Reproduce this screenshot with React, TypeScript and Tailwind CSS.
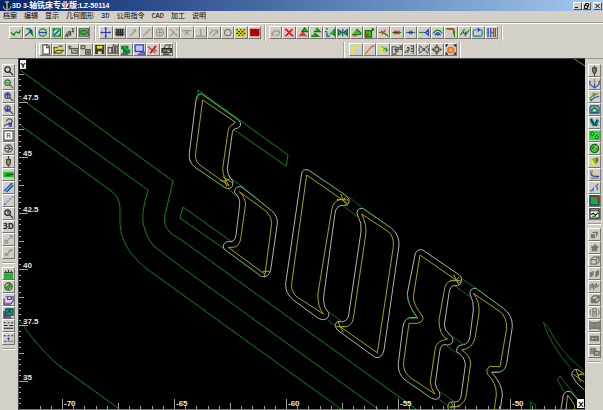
import { ReactNode } from 'react';

// ============================================================
// Toolbar icons: drawn on a 12 x 12 grid
// Each part is [path, colour] or [path, colour, 'fill']
// ============================================================

type Part = [string, string] | [string, string, 'fill'];

interface Tool {
  label: string;
  parts: Part[];
  text?: string;
  textColor?: string;
  disabled?: boolean;
}

const K = '#222222';
const G = '#00a000';
const LG = '#10d020';
const B = '#2038e0';
const R = '#e82020';
const Y = '#f0f000';
const D = '#9a978f';
const S = '#555555';

const LENS = 'M2 5a3 3 0 1 0 6 0a3 3 0 1 0-6 0M7.500 7.500L11 11';

const DRAW_TOOLS: Tool[] = [
  { label: 'Contour', parts: [['M1 6L4 9Q6 4 8 6T11 3', '#008000']] },
  { label: 'Arc', parts: [['M2 2Q9 1 9 8M6 5L10 10', G], ['M1 10L8 4M5 4H8V7', B]] },
  { label: 'Circle', parts: [['M2 6a4 4 0 1 0 8 0a4 4 0 1 0-8 0', G], ['M2 6H10', B]] },
  { label: 'Rectangle', parts: [['M2 2H10V10H2Z', G], ['M3 9L9 3', B], ['M2 2h2v2H2ZM8 8h2v2H8Z', '#008080', 'fill']] },
  { label: 'Letters', parts: [['M1 11L3 7L4 11M2 9.500H4M5 9V5H7V7H5M7 7V9H5M11 2H9V5H11', S]] },
  { label: 'Pocket', parts: [['M1 2H11V10H1Z', S], ['M2 6Q2 4 4 4H8Q10 4 10 6T8 8H4Q2 8 2 6Z', '#50a050', 'fill'], ['M2 6Q2 4 4 4H8Q10 4 10 6T8 8H4Q2 8 2 6Z', '#108010']] },
];

const SNAP_TOOLS: Tool[] = [
  { label: 'Free', parts: [['M6 1V11M1 6H11M5 2L6 1L7 2M5 10L6 11L7 10M2 5L1 6L2 7M10 5L11 6L10 7', '#2040b0']] },
  { label: 'Grid', parts: [['M1 3H11M1 5.500H11M1 8H11M3 2V10M5 2V10M7 2V10M9 2V10', K]] },
  { label: 'End point', parts: [['M3 10L9 3M7 3H9V5', D]], disabled: true },
  { label: 'Middle', parts: [['M2 10L10 2M5 5L7 7', D]], disabled: true },
  { label: 'Centre', parts: [['M2 6a4 4 0 1 0 8 0a4 4 0 1 0-8 0M6 3V9M3 6H9', D]], disabled: true },
  { label: 'Crossing', parts: [['M2 2L10 10M2 10L7 5M9 3L10 2', D]], disabled: true },
  { label: 'Tangent', parts: [['M1 4H11M4 9L6 5L8 9', D]], disabled: true },
  { label: 'Perpendicular', parts: [['M1 10H11M6 2V10', D]], disabled: true },
  { label: 'Parallel', parts: [['M1 8L6 3M5 10L10 4M7 4H10V7', D]], disabled: true },
  { label: 'Ring', parts: [['M2.500 6a3.500 3.500 0 1 0 7 0a3.500 3.500 0 1 0-7 0', '#77756f']], disabled: true },
  { label: 'Yellow layer', parts: [['M1 2H11V10H1Z', '#e0e000', 'fill'], ['M1 3h2M5 3h2M9 3h2M3 5h2M7 5h2M1 7h2M5 7h2M9 7h2M3 9h2M7 9h2', K]] },
  { label: 'Red layer', parts: [['M1 2H11V10H1Z', '#e00000', 'fill'], ['M1 3h2M5 3h2M9 3h2M3 5h2M7 5h2M1 7h2M5 7h2M9 7h2M3 9h2M7 9h2', '#300000']] },
];

const EDIT_TOOLS: Tool[] = [
  { label: 'Undo', parts: [['M2 6V9H5M2 9Q3 4 7 4T10 7Q10 9 8 9H6', D]], disabled: true },
  { label: 'Delete', parts: [['M2 2L10 10M10 2L2 10M3 2L11 10M10 3L3 10', '#f01010']] },
  { label: 'Move', parts: [['M6 5L11 10H1Z', '#f03030', 'fill'], ['M8 1L11 5H5Z', LG, 'fill'], ['M8 1L11 5H5Z', '#107010']] },
  { label: 'Copy', parts: [['M5 6L9 10H1Z', LG, 'fill'], ['M7 1L11 5H4Z', LG, 'fill'], ['M7 1L11 5H4M5 7L9 10H1', '#107010']] },
  { label: 'Rotate', parts: [['M5 8L11 2V9Z', LG, 'fill'], ['M11 2V10M2 2H4M1 5H3', '#107010'], ['M3 6V10H6', B]] },
  { label: 'Mirror', parts: [['M1 3L5 6L1 9ZM11 3L7 6L11 9Z', LG, 'fill'], ['M1 3V9L5 6ZM11 3V9L7 6Z', '#107010'], ['M6 2V10', B]] },
  { label: 'Stretch', parts: [['M6 2L11 7H2Z', LG, 'fill'], ['M6 2L11 7M1 8H11', '#107010'], ['M1 10L4 7L7 10Z', '#f03030', 'fill']] },
  { label: 'Scale', parts: [['M1 4H8V11H1Z', LG, 'fill'], ['M1 4H8V11H1ZM7 5L10 2M8 2H10V4', '#107010'], ['M2 7H5V10H2Z', '#f02020', 'fill']] },
  { label: 'Trim', parts: [['M1 6H4M7 7L11 10', G], ['M3 4L8 8M8 3L4 8', R]] },
  { label: 'Trim both', parts: [['M1 6H3M9 6H11', G], ['M3 4L6 8M6 4L3 8M7 4L9 8M9 4L7 8', '#d04020'], ['M3 6H9', '#703020']] },
  { label: 'Break', parts: [['M1 6H11', G], ['M3 6H9M5 4V8M7 4V8', B]] },
  { label: 'Extend', parts: [['M1 6H6', G], ['M6 6H8M11 3L8 6L11 9Z', B]] },
  { label: 'Offset', parts: [['M1 7Q6 0 11 7', G], ['M3 9Q6 3 9 9M4 7L6 9L8 7', B]] },
  { label: 'Fillet', parts: [['M1 2H6Q10 2 10 6V11', G], ['M2 2H9V8', R]] },
  { label: 'Chamfer', parts: [['M1 9L6 2M6 10L11 3', G], ['M4 6L7 8M7 8V5', B]] },
  { label: 'Closed contour', parts: [['M4 3H9Q11 3 11 5V8Q11 10 9 10H3Q1 10 1 8V5Q1 3 4 3', '#0090a0'], ['M6 1L8 3L6 5', B]] },
  { label: 'Distance', parts: [['M2 1V11M5 1V11', B], ['M5 6H8M3 5L2 6L3 7', G], ['M8 1V11M10 1V11', R]] },
];

const FILE_TOOLS: Tool[] = [
  { label: 'New', parts: [['M3 1H8L10 3V11H3Z', '#ffffff', 'fill'], ['M3 1H8L10 3V11H3ZM7 1V4H10', S]] },
  { label: 'Open', parts: [['M1 4H5L6 5H9V10H1Z', '#e8e060', 'fill'], ['M1 10V4H5M1 10L4 7H11L8 10ZM6 3Q8 1 10 3', '#606000']] },
  { label: 'Import', parts: [['M1 2L5 6M2 6L4 2M5 5H11V10H5ZM7 7H9V8', S]] },
  { label: 'Merge', parts: [['M1 2H5V5H1ZM6 6H11V11H6ZM7 7L10 10M10 7L7 10', S]] },
  { label: 'Save', parts: [['M1 1H11V11H1Z', '#404010', 'fill'], ['M3 2H9V5H3Z', '#e0e040', 'fill'], ['M4 8H8V11H4Z', '#d8d8d8', 'fill']] },
  { label: 'Save part', parts: [['M1 4H5V10H1ZM6 3H8V10H6ZM9 2H11V10H9Z', S], ['M6 1H8', K]] },
  { label: 'Export', parts: [['M1 2H9V6H1ZM3 6H11V10H3Z', '#108030', 'fill'], ['M4 3L9 7', LG], ['M1 11H9', K]] },
  { label: 'Screen', parts: [['M2 2H10V8H2Z', '#b8c8ff', 'fill'], ['M1 1H10V8H1ZM6 9H11V11H4', '#3838c0']] },
  { label: 'Clear', parts: [['M1 3L9 10M9 2L3 10M10 2L4 10', '#e02020'], ['M7 5L10 8', S]] },
  { label: 'Print', parts: [['M3 5L5 1H10L8 5', S], ['M1 5H11V9H1Z', '#77756f', 'fill'], ['M1 5H11V9H1ZM2 11H9', K], ['M7 8H9', Y]] },
];

const VIEW_TOOLS: Tool[] = [
  { label: 'Curve', parts: [['M3 11Q1 4 4 4Q8 4 11 1M2 6L5 3', Y]] },
  { label: 'Line', parts: [['M1 11L5 6Q8 2 11 2', '#e05050']] },
  { label: 'Pick', parts: [['M2 2L10 5L6 8Z', LG, 'fill'], ['M2 2L5 10L7 5Z', Y, 'fill'], ['M9 4L11 7L9 8', '#208020']] },
  { label: 'Sort', parts: [['M1 3H5V11H1ZM3 6H5M6 4H8V6H6V8H8M9 2H11V6H9M9 4H11', S]] },
  { label: 'Order', parts: [['M1 8V10M3 4H5V7H3V9H5M7 2H10V8H7M7 5H10M10 9V11', S]] },
  { label: 'Zoom in all', parts: [['M1 2L4 4M11 2L8 4M1 10L4 8M11 10L8 8M1 4V8M11 4V8M5 5H7V7H5Z', S]] },
  { label: 'Pan', parts: [['M4 4H8V8H4Z', S], ['M6 0L8 3H4ZM6 12L8 9H4ZM0 6L3 4V8ZM12 6L9 4V8Z', S, 'fill']] },
  { label: 'Shade', parts: [['M4 3H8L10 5V8L8 10H4L2 8V5Z', '#f07020', 'fill'], ['M1 3V1H3M9 1H11V3M11 9V11H9M3 11H1V9', K], ['M4 5H8V8H4Z', '#ffc050', 'fill']] },
];

const LEFT_TOP: Tool[] = [
  { label: 'Zoom', parts: [[LENS, K]] },
  { label: 'Zoom window', parts: [[LENS, S], ['M3 4H7V6H3Z', LG, 'fill']] },
  { label: 'Zoom up', parts: [[LENS, '#404070'], ['M5 3V7M3 5L5 3L7 5', B]] },
  { label: 'Zoom down', parts: [[LENS, '#404070'], ['M5 3V7M3 5L5 7L7 5', B]] },
  { label: 'Pan view', parts: [['M4 5a3 3 0 1 1 6 0L8 8H4L1 10', S], ['M6 6L9 9M9 6V10H6', B]] },
  { label: 'Redraw', parts: [['M1 1H11V11H1Z', '#ffffff', 'fill'], ['M1 1H11V11H1Z', S]], text: 'R', textColor: '#333333' },
  { label: 'Rotate view', parts: [['M2 6a4 4 0 1 0 8 0a4 4 0 1 0-8 0M2 6H10M5 3L8 6L5 9', S]] },
  { label: 'Cutter', parts: [['M4 4H8V8L6 11L4 8Z', '#a8a050', 'fill'], ['M6 0V4M4 4H8V8L6 11L4 8Z', '#404038']] },
  { label: 'Stock', parts: [['M0 3H12V9H0Z', '#18d028', 'fill'], ['M3 5H8V8H3Z', '#207020', 'fill'], ['M8 6H11', K]] },
  { label: 'Blade', parts: [['M2 11L10 2L11 1V4L4 11Z', '#30c060', 'fill'], ['M1 10L10 1M4 11L11 4', B]] },
  { label: 'Points', parts: [['M1 10h2M4 7h2M7 4h2M10 2h1', '#3040e0'], ['M3 9L9 3', '#a0a8e0']] },
  { label: 'Query', parts: [[LENS, K], ['M4 4H6V5L5 6M5 7V7.500', '#606030']] },
  { label: '3D', parts: [], text: '3D', textColor: '#222222' },
  { label: 'Fit', parts: [['M1 10L4 7M2 7H5V10H2ZM6 6L10 2M7 2H10V5', D]], disabled: true },
  { label: 'Surface', parts: [['M1 9L3 6L5 7L7 3L11 2L9 5L7 6L5 10Z', D, 'fill']], disabled: true },
];

const LEFT_BOTTOM: Tool[] = [
  { label: 'Machine', parts: [['M1 6H11V10H1Z', '#18b828', 'fill'], ['M1 5H11M3 3V5M6 2V5M9 3V5', '#404040'], ['M1 11H11', '#107010']] },
  { label: 'Hatch', parts: [['M2 6a4 4 0 1 0 8 0a4 4 0 1 0-8 0', '#a8c8a0', 'fill'], ['M2 6a4 4 0 1 0 8 0a4 4 0 1 0-8 0M3 8L8 3M5 9L9 5', '#207020']] },
  { label: 'Layer off', parts: [['M1 5H8V11H1Z', '#e890b0', 'fill'], ['M3 3H11V9H3Z', '#d8d8f8', 'fill'], ['M3 3H11V8L8 11H1V5M5 3V6H9V3', '#5040a0']] },
  { label: 'Layer on', parts: [['M1 5H8V11H1Z', '#d040c0', 'fill'], ['M3 2H11V9H3Z', '#10b030', 'fill'], ['M3 2H11V9H3ZM1 4V11H9M5 7L7 3L9 7', '#104080']] },
  { label: 'Line style', parts: [['M1 3H3M5 3H7M9 3H11M1 6H5M7 6H11M1 9H11', K]] },
  { label: 'Line colour', parts: [['M1 3H3M5 3H7M9 3H11', K], ['M6 5V8M5 6H7', B], ['M1 9H4M5 9H7M8 9H11', R]] },
];

const RIGHT_TOP: Tool[] = [
  { label: 'Drill', parts: [['M4 3H8V7L6 10L4 7Z', '#777777', 'fill'], ['M6 1V3M6 10V12M4 3H8V7L6 10L4 7Z', '#444444']] },
  { label: 'Plunge', parts: [['M1 3V7L6 11L11 7V3M1 3L0 5M11 3L12 5M6 6V10', '#3050c0'], ['M5 1H7V6H5Z', '#a0a040', 'fill']] },
  { label: 'Profile', parts: [['M1 10Q2 4 10 3', '#18b030'], ['M2 11Q4 7 11 6', B], ['M4 2H7V6H4Z', '#908030', 'fill']] },
  { label: 'Pocketing', parts: [['M2 2H10L11 4V10H1V4Z', '#70d090', 'fill'], ['M2 2H10L11 4V10H1V4ZM3 9V6L6 4L9 6V9Z', '#2050a0'], ['M5 6H7V8H5Z', Y, 'fill']] },
  { label: 'Rough', parts: [['M1 2H4L6 6L9 2L11 4L9 10H4L1 5Z', '#1890a0', 'fill'], ['M2 2L5 8L9 9M9 3L7 7', '#103040']] },
  { label: 'Holes', parts: [['M0 1H12V11H0Z', '#18e028', 'fill'], ['M2 4a1.500 1.500 0 1 0 3 0a1.500 1.500 0 1 0-3 0M7 8a1.500 1.500 0 1 0 3 0a1.500 1.500 0 1 0-3 0', '#ffffff', 'fill'], ['M2 4a1.500 1.500 0 1 0 3 0a1.500 1.500 0 1 0-3 0M7 8a1.500 1.500 0 1 0 3 0a1.500 1.500 0 1 0-3 0', '#206020']] },
  { label: 'Round', parts: [['M1.500 6a4.500 4.500 0 1 0 9 0a4.500 4.500 0 1 0-9 0', '#30d040', 'fill'], ['M1.500 6a4.500 4.500 0 1 0 9 0a4.500 4.500 0 1 0-9 0M3 6L6 4L9 7', '#106020'], ['M6 3H9V6H6Z', '#c0b030', 'fill']] },
  { label: 'Finish', parts: [['M1 5L6 2L9 8L4 11Z', '#40d040', 'fill'], ['M1 5L4 4L7 10L4 11Z', '#f0e040', 'fill'], ['M7 2H10V6L8 8Z', '#806030', 'fill']] },
  { label: 'Sweep', parts: [['M2 3Q2 8 6 8H11', B], ['M2 10H11', '#808040'], ['M2 1H4V5H2ZM5 6H7V8H5Z', '#b0a020', 'fill']] },
  { label: 'Path', parts: [['M1 10L4 9L5 6M7 5L10 2M9 6V9', '#4060d0'], ['M3 8H5V10H3ZM8 5H10V7H8Z', '#5080e0', 'fill']] },
  { label: 'Simulate', parts: [['M1 1H11V11H1Z', '#10b050', 'fill'], ['M4 2H10V9Z', '#f03030', 'fill'], ['M1 1H11V11H1Z', '#103030']] },
  { label: 'NC output', parts: [['M1 1H11V11H1Z', '#ffffff', 'fill'], ['M1 1H11V11H1ZM1 3H11M2 7L5 6L7 8L10 5', K], ['M3 9H8', G]] },
];

const RIGHT_BOTTOM: Tool[] = [
  { label: 'Solid', parts: [['M2 5L5 3H10L9 7L6 10H2Z', '#77756f', 'fill'], ['M2 5H7V10', '#c0bdb6']], disabled: true },
  { label: 'Burst', parts: [['M2 5L5 4L7 2L8 4L11 5L9 7V10H3V7Z', '#77756f', 'fill']], disabled: true },
  { label: 'Box', parts: [['M2 5H8V10H2ZM2 5L5 2H11V7L8 10M8 5L11 2', '#77756f']], disabled: true },
  { label: 'Split', parts: [['M1 5L5 3V8L2 10H1ZM7 4L11 2V7L8 10H7Z', '#77756f', 'fill']], disabled: true },
  { label: 'Faces', parts: [['M1 10V5L4 3V7M5 10V5L8 3V7M8 7L11 4', '#77756f'], ['M2 5H4V8H2ZM6 4H8V8H6Z', '#8a877f', 'fill']], disabled: true },
  { label: 'Hollow', parts: [['M2 5H8V10H2Z', '#77756f', 'fill'], ['M2 5L5 2H11V7L8 10M8 5L11 2M4 7H6', '#66645f']], disabled: true },
  { label: 'Turn', parts: [['M2 3Q0 6 2 9M10 3Q12 6 10 9M4 2H8V10H4ZM4 5H8', '#88857d'], ['M5 6H7V8H5Z', '#77756f', 'fill']], disabled: true },
  { label: 'Plate', parts: [['M2 3H10V9H2Z', '#88857d', 'fill'], ['M1 1V11M11 1V11M2 3H10M2 9H10', '#5f5d58']], disabled: true },
  { label: 'Slot', parts: [['M1 3H11V9H1Z', '#77756f', 'fill'], ['M3 6H5M7 6H8', '#dddad2']], disabled: true },
  { label: 'Section', parts: [['M1 2H8V9H1Z', '#88857d', 'fill'], ['M6 6H11V10H6Z', '#b0ada5', 'fill'], ['M6 6H11V10H6Z', '#66645f']], disabled: true },
];

const MENUS = ['档案', '编辑', '显示', '几何图形', '3D', '公用指令', 'CAD', '加工', '说明'];

function ToolButton({ tool }: { tool: Tool }) {
  return (
    <button
      aria-label={tool.label}
      disabled={tool.disabled}
      className="h-[13px] min-w-0 flex-1 border border-t-white border-l-white border-r-[#77746e] border-b-[#77746e] bg-[#d0cdc5]"
    >
      <svg viewBox="0 0 12 12" className="block h-full w-full" strokeWidth="1.3" fill="none">
        {tool.parts.map(([d, color, mode], i) => (
          <path key={i} d={d} stroke={mode ? 'none' : color} fill={mode ? color : 'none'} />
        ))}
        {tool.text && (
          <text
            x="6"
            y="9"
            textAnchor="middle"
            fill={tool.textColor}
            className={tool.text.length > 1 ? 'font-sans text-[9px] font-bold' : 'font-sans text-[8px]'}
          >
            {tool.text}
          </text>
        )}
      </svg>
    </button>
  );
}

function ToolRow({ tools, className }: { tools: Tool[]; className: string }) {
  return (
    <div role="toolbar" className={`flex shrink-0 ${className}`}>
      {tools.map((t) => (
        <ToolButton key={t.label} tool={t} />
      ))}
    </div>
  );
}

function ToolColumn({ tools }: { tools: Tool[] }) {
  return (
    <div role="toolbar" className="flex flex-col">
      {tools.map((t) => (
        <div key={t.label} className="flex">
          <ToolButton tool={t} />
        </div>
      ))}
    </div>
  );
}

function Etch() {
  return <div className="h-[2px] border-t border-t-[#9a978f] border-b border-b-white" />;
}

function Divider() {
  return <div className="h-[16px] w-[2px] shrink-0 border-l border-l-[#aaa79f] border-r border-r-white" />;
}

function WindowButton({ label, children }: { label: string; children: ReactNode }) {
  return (
    <button
      aria-label={label}
      className="h-[8px] w-[9px] border border-t-white border-l-white border-r-[#555] border-b-[#555] bg-[#d4d0c8]"
    >
      <svg viewBox="0 0 7 6" className="block h-full w-full" stroke="#111" fill="none">
        {children}
      </svg>
    </button>
  );
}

// ============================================================
// Drawing area: tool paths, part contours and rulers
// ============================================================

const GREEN_LINES = [
  'M20 70L173 181L165 215Q163 224 168 230Q172 235 180 239L416 409',
  'M20 98L148 190Q140 215 144 227Q148 241 155 247L180 266L378 409',
  'M20 125L110 190Q120 197 120 208V224Q121 245 138 261Q142 265 147 269L341 409',
  'M20 321Q35 344 57 364L118 408',
  'M198 100V90L288 155L286 166L233 129',
  'M232 242L183 207L180 218L223 248',
  'M229 177L243 187M227 188L238 197',
];

// Contours below use three units per screen pixel from their own origin
const SHAPES = [
  {
    origin: 'translate(170 80) scale(.33333)',
    green: 'M95 42L205 120M75 262L165 323M220 322L305 392M162 507L275 590',
    white: [
      'M95 42L205 120Q215 127 211 138Q206 146 196 146Q188 148 187 158L172 265Q172 282 180 292Q193 303 188 317Q181 330 165 323L75 262Q55 245 58 220L78 60Q80 42 95 42Z',
      'M205 320Q192 325 194 338Q211 352 209 375L198 465Q196 482 183 485H170Q155 493 162 507L275 590Q297 593 302 570L322 430Q324 410 305 392L220 325Q212 318 205 320Z',
    ],
    yellow: [
      'M98 60L197 127L183 136Q176 141 174 155L158 265Q158 290 178 318L90 255Q74 243 77 220Z',
      'M208 335Q229 355 226 378L213 470Q210 500 190 502H175L285 583L305 430Q306 412 290 395Z',
      'M158 290L187 308M165 303L150 302M165 303L180 297M165 303L170 320M278 574H298M284 583V592',
    ],
  },
  {
    origin: 'translate(280 160) scale(.33333)',
    green: 'M85 30L200 108M208 112L250 145L335 205M190 138L235 172M145 455L190 488M140 478L172 502',
    white: [
      'M65 40Q68 25 85 30L200 108Q212 118 206 130Q202 137 190 136Q168 136 165 160L131 410Q130 438 140 450Q152 463 142 474Q132 483 115 475L40 420Q15 400 17 370Z',
      'M233 167Q225 145 248 145L335 205Q358 225 357 255L312 570Q305 598 285 592L172 510Q160 495 172 485H188Q203 482 206 465L243 215Q247 188 233 167Z',
    ],
    yellow: [
      'M80 45L202 130M195 119H180Q160 122 155 150L114 400Q112 440 130 462L50 410Q32 395 35 370L80 45',
      'M245 162L325 215Q342 228 340 260L292 578L180 500H195Q215 500 220 475L257 225Q262 200 245 162',
      'M170 118L205 120M188 118L183 102M190 122L202 136M188 120L198 112M168 500H195M180 500L174 483M180 500L190 518',
    ],
  },
  {
    origin: 'translate(390 240) scale(.33333)',
    green:
      'M210 112L255 143L340 205M195 138L240 170M185 288L222 314M170 318L205 342M150 455L195 486M147 478L187 507M52 165Q56 200 82 235H60M350 370Q345 395 325 395H305L315 410M45 420L125 475M460 247L475 262Q505 330 583 393M460 247Q480 315 545 388M522 455L502 420L510 408L548 457L583 503M422 508L421 485L437 496V508',
    white: [
      'M75 45Q80 25 98 30L208 105Q220 115 211 131Q205 140 192 137Q180 138 177 160L163 255Q163 270 180 285Q193 296 187 307Q180 318 165 314Q152 312 149 335L136 430Q138 448 148 455Q153 468 146 475Q138 482 125 475L45 420Q22 400 25 370L38 265Q42 235 60 233H82Q52 195 52 160Z',
      'M331 507L337 465Q338 435 305 397H325Q345 395 350 370L367 260Q368 225 340 205L258 145Q240 143 240 162Q252 185 250 210L240 290Q235 312 220 314Q198 315 200 335Q225 350 226 375L213 470Q210 485 195 486H182Q170 493 175 507',
      'M583 402L562 388Q546 387 545 405Q555 428 583 450M513 507L520 465Q528 448 545 457L583 503',
    ],
    yellow: [
      'M90 45L212 130M205 122H185Q165 125 162 155L147 240Q147 285 172 298L158 301Q137 307 135 330L121 425Q120 442 135 462L60 412Q38 395 41 365L57 250H82Q105 245 97 228Q70 195 70 170L90 45',
      'M313 507L319 465Q320 428 292 402Q286 390 298 379L330 380L350 265Q350 230 330 215L250 160Q270 185 267 220L255 295Q248 325 215 330Q240 345 242 370L228 470Q222 500 180 503',
      'M180 121H215M198 120L191 103M198 120L208 136M198 120L207 112M178 500H210M190 500L184 487M550 403L583 426M562 404H583M565 408L558 388M565 408L577 397M564 408L572 425M528 507L533 465L553 495V507',
    ],
  },
];

const Y_LABELS = ['47.5', '45', '42.5', '40', '37.5', '35'];
const X_LABELS = ['-70', '-65', '-60', '-55', '-50'];

function tickLength(i: number) {
  if (i % 10 === 0) return 9;
  return i % 5 === 0 ? 5 : 2;
}

function rulerPaths() {
  let d = '';
  // vertical ruler: ten ticks between labels
  for (let i = -5; i < 55; i++) {
    const y = Math.round(101.5 + i * 5.59);
    if (y < 406) d += `M19 ${y + 0.5}h${tickLength(i)}`;
  }
  // horizontal ruler: ten ticks between labels
  for (let i = -2; i < 46; i++) {
    const x = Math.round(62 + i * 11.2);
    if (x < 575) d += `M${x + 0.5} 409v-${tickLength(i) + 1}`;
  }
  return d;
}

function Drawing() {
  return (
    <svg
      viewBox="19 59 566 351"
      preserveAspectRatio="xMinYMin slice"
      className="block h-full w-full bg-black"
      fill="none"
      strokeWidth="1"
    >
      <g stroke="#008a08">
        {GREEN_LINES.map((d) => (
          <path key={d} d={d} />
        ))}
      </g>
      <path d="M573 58L585 66" stroke="#909000" />
      {SHAPES.map((s) => (
        <g key={s.origin} transform={s.origin} strokeWidth="3">
          {s.yellow.map((d) => (
            <path key={d} d={d} stroke="#aaa408" />
          ))}
          {s.white.map((d) => (
            <path key={d} d={d} stroke="#b4b4b4" />
          ))}
          <path d={s.green} stroke="#00a010" strokeOpacity=".7" />
        </g>
      ))}
      <path d={rulerPaths()} stroke="#a0a0a0" />
      <path d="M19 409.500H585" stroke="#808080" />
      <g fill="#e4e4e4" className="font-['Liberation_Sans',sans-serif] text-[8px] font-bold">
        {Y_LABELS.map((t, i) => (
          <text key={t} x="23" y={Math.round(100 + i * 55.9)}>
            {t}
          </text>
        ))}
        {X_LABELS.map((t, i) => (
          <text key={t} x={64 + i * 112} y="406">
            {t}
          </text>
        ))}
      </g>
      {/* axis markers */}
      <path d="M20 60H26V69H20ZM577 399H584V408H577Z" fill="#f4f4f4" />
      <g fill="#000" className="font-['Liberation_Sans',sans-serif] text-[8px] font-bold">
        <text x="23" y="68" textAnchor="middle">Y</text>
        <text x="581" y="407" textAnchor="middle">X</text>
      </g>
    </svg>
  );
}

export default function App() {
  return (
    <div className="flex h-screen flex-col overflow-hidden bg-[#d4d0c8] font-['Liberation_Mono','Noto_Sans_CJK_SC',monospace] text-[7px] text-black">
      {/* Title bar */}
      <header className="flex h-[11px] shrink-0 items-center bg-gradient-to-r from-[#0a246a] to-[#a6caf0] pl-[2px]">
        <svg viewBox="0 0 10 10" className="h-[10px] w-[10px]" fill="none" stroke="#c8c8a0">
          <path d="M5 0V9M3 1H7M1 5Q2 9 5 9T9 5" />
          <path d="M3 3H7V6H3Z" fill="#222" stroke="#111" />
          <path d="M5 2V7" stroke="#e8e8d0" />
        </svg>
        <h1 className="font-['Liberation_Sans','Noto_Sans_CJK_SC',sans-serif] text-[7px] leading-[11px] font-bold whitespace-pre text-white">
          3D 3-<span className="text-[8px]">轴铣床专业版</span>:LZ-50114
        </h1>
        <div className="ml-auto flex pt-[1px] pr-[1px]">
          <WindowButton label="Minimize">
            <path d="M1 4.500H4" />
          </WindowButton>
          <WindowButton label="Restore">
            <path d="M2.500 2V.5H5.500V3.500H4.500M1.500 2.500H4.500V5.500H1.500Z" />
          </WindowButton>
          <div className="w-[2px]" />
          <WindowButton label="Close">
            <path d="M1.500 1L5.500 5M5.500 1L1.500 5" />
          </WindowButton>
        </div>
      </header>

      {/* Menu bar */}
      <nav className="flex h-[11px] shrink-0 items-center gap-[7px] pl-[3px]">
        {MENUS.map((m) => (
          <button key={m} className="leading-[11px] whitespace-nowrap text-black">
            {m}
          </button>
        ))}
      </nav>
      <Etch />

      {/* Toolbars */}
      <div className="flex h-[17px] shrink-0 items-center pl-[9px]">
        <ToolRow tools={DRAW_TOOLS} className="w-[81px]" />
        <div className="flex w-[9px] justify-center">
          <Divider />
        </div>
        <ToolRow tools={SNAP_TOOLS} className="w-[162px]" />
        <div className="flex w-[8px] justify-center">
          <Divider />
        </div>
        <ToolRow tools={EDIT_TOOLS} className="w-[229px]" />
        <div className="flex w-[8px] justify-center">
          <Divider />
        </div>
      </div>
      <div className="flex h-[17px] shrink-0 items-center pl-[35px]">
        <Divider />
        <ToolRow tools={FILE_TOOLS} className="ml-[2px] w-[134px]" />
        <div className="ml-[2px]">
          <Divider />
        </div>
        <div className="ml-[166px]">
          <Divider />
        </div>
        <ToolRow tools={VIEW_TOOLS} className="ml-[4px] w-[108px]" />
        <div className="ml-[2px]">
          <Divider />
        </div>
      </div>

      {/* Work area */}
      <main className="flex min-h-0 flex-1">
        <aside className="flex w-[18px] shrink-0 flex-col gap-[3px] border-t border-t-[#9a978f] pt-[5px] pr-[3px] pl-[2px]">
          <ToolColumn tools={LEFT_TOP} />
          <Etch />
          <ToolColumn tools={LEFT_BOTTOM} />
          <Etch />
        </aside>
        <section className="min-w-0 flex-1 border-t border-l border-[#404040] bg-black">
          <Drawing />
        </section>
        <aside className="flex w-[18px] shrink-0 flex-col gap-[3px] border-t border-t-[#9a978f] pt-[5px] pr-[2px] pl-[3px]">
          <ToolColumn tools={RIGHT_TOP} />
          <Etch />
          <ToolColumn tools={RIGHT_BOTTOM} />
          <Etch />
        </aside>
      </main>
    </div>
  );
}
